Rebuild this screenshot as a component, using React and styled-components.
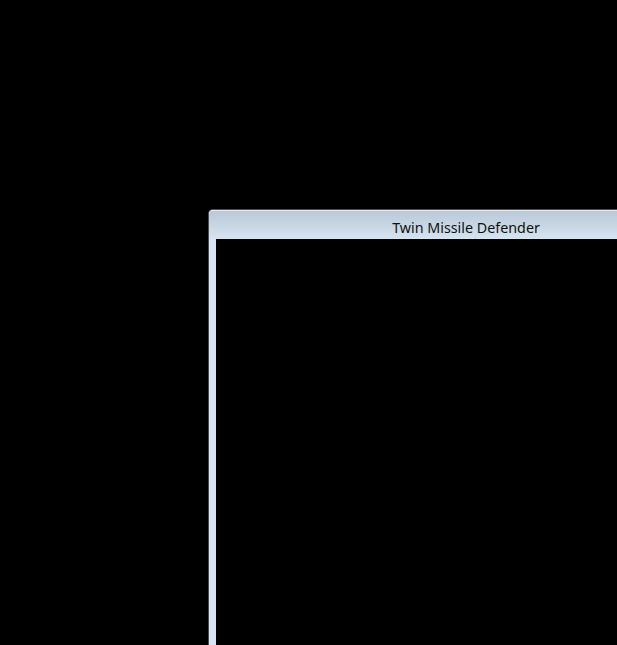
import React from "react";
import styled, { createGlobalStyle } from "styled-components";

const Global = createGlobalStyle`
  html, body { margin: 0; padding: 0; background: #000; overflow: hidden; }
  #root { width: 617px; height: 645px; overflow: hidden; }
`;

const Desktop = styled.div`
  width: 617px;
  height: 645px;
  background: #000;
  overflow: hidden;
  padding: 209px 0 0 208px;
  box-sizing: border-box;
`;

const Window = styled.div`
  width: 516px;
  height: 520px;
  box-sizing: border-box;
  border: 1px solid #4a4e52;
  border-bottom: none;
  border-radius: 5px 5px 0 0;
  background: #d7e4f1;
  display: flex;
  flex-direction: column;
`;

const TitleBar = styled.div`
  height: 29px;
  flex: none;
  border-radius: 4px 4px 0 0;
  background: linear-gradient(to bottom, #bac9d8 0%, #c8d6e4 50%, #d6e4f1 100%);
  border-top: 1px solid #e3eaf1;
  box-sizing: border-box;
  display: flex;
  align-items: center;
  justify-content: center;
  padding-top: 4px;
  font-family: "Noto Sans", "DejaVu Sans", sans-serif;
  font-size: 14.3px;
  color: #111;
`;

const Frame = styled.div`
  flex: 1;
  padding: 0 7px;
  background: #d7e4f1;
  display: flex;
`;

const Canvas = styled.div`
  flex: 1;
  background: #000;
`;

export default function App() {
  return (
    <>
      <Global />
      <Desktop>
        <Window>
          <TitleBar>Twin Missile Defender</TitleBar>
          <Frame>
            <Canvas />
          </Frame>
        </Window>
      </Desktop>
    </>
  );
}
